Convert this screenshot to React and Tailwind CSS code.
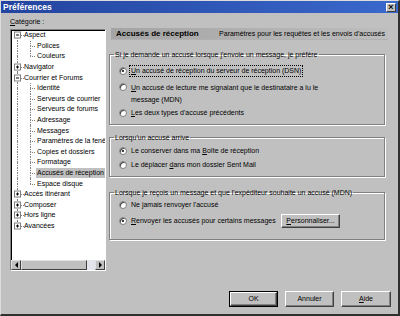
import React from 'react'

const tree = [
  { t: 'Aspect', lvl: 0, exp: '-' },
  { t: 'Polices', lvl: 1 },
  { t: 'Couleurs', lvl: 1, last: true },
  { t: 'Navigator', lvl: 0, exp: '+' },
  { t: 'Courrier et Forums', lvl: 0, exp: '-' },
  { t: 'Identité', lvl: 1 },
  { t: 'Serveurs de courrier', lvl: 1 },
  { t: 'Serveurs de forums', lvl: 1 },
  { t: 'Adressage', lvl: 1 },
  { t: 'Messages', lvl: 1 },
  { t: 'Paramètres de la fenêtre', lvl: 1 },
  { t: 'Copies et dossiers', lvl: 1 },
  { t: 'Formatage', lvl: 1 },
  { t: 'Accusés de réception', lvl: 1, sel: true },
  { t: 'Espace disque', lvl: 1, last: true },
  { t: 'Accès itinérant', lvl: 0, exp: '+' },
  { t: 'Composer', lvl: 0, exp: '+' },
  { t: 'Hors ligne', lvl: 0, exp: '+' },
  { t: 'Avancées', lvl: 0, exp: '+' },
]

function Expander({ sign }) {
  return (
    <span className="absolute left-[3px] top-1/2 flex h-[7px] w-[7px] -translate-y-1/2 items-center justify-center border border-[#808080] bg-white">
      <span className="absolute h-px w-[3px] bg-black" />
      {sign === '+' && <span className="absolute h-[3px] w-px bg-black" />}
    </span>
  )
}

function TreeRow({ item, first, lastRoot }) {
  return (
    <div className="flex h-[10.6px] items-center whitespace-nowrap">
      {/* root level lines */}
      <div className="relative h-full w-[13px] shrink-0">
        {!first && <span className="absolute left-[6px] top-0 h-1/2 border-l border-dotted border-[#808080]" />}
        {!lastRoot && <span className="absolute left-[6px] top-1/2 h-1/2 border-l border-dotted border-[#808080]" />}
        {item.lvl === 0 && (
          <>
            <span className="absolute left-[10px] top-1/2 w-[3px] border-t border-dotted border-[#808080]" />
            <Expander sign={item.exp} />
          </>
        )}
      </div>
      {item.lvl === 1 && (
        <div className="relative h-full w-[12px] shrink-0">
          <span className="absolute left-[6px] top-0 h-1/2 border-l border-dotted border-[#808080]" />
          {!item.last && <span className="absolute left-[6px] top-1/2 h-1/2 border-l border-dotted border-[#808080]" />}
          <span className="absolute left-[6px] top-1/2 w-[5px] border-t border-dotted border-[#808080]" />
        </div>
      )}
      <span className={`leading-[10px] ${item.lvl === 1 ? 'px-px' : ''} ${item.sel ? 'bg-[#c0c0c0]' : ''}`}>{item.t}</span>
    </div>
  )
}

function Radio({ on }) {
  return (
    <span className="flex h-[8px] w-[8px] shrink-0 items-center justify-center rounded-full border border-[#808080] bg-white shadow-[inset_1px_1px_0_#404040]">
      {on && <span className="h-[2px] w-[2px] rounded-full bg-black" />}
    </span>
  )
}

function Option({ on, focus, children, className = '' }) {
  return (
    <div className={`flex items-start ${className}`}>
      <span className="flex h-[12px] items-center">
        <Radio on={on} />
      </span>
      <span className={`ml-[2px] border px-px leading-[10px] ${focus ? 'border-dotted border-black' : 'border-transparent'}`}>
        {children}
      </span>
    </div>
  )
}

function Group({ label, className = '', children }) {
  return (
    <fieldset className={`w-[276px] border border-[#808080] px-[4px] shadow-[inset_1px_1px_0_#fff,1px_1px_0_#fff] ${className}`}>
      <legend className="px-px text-[7px] leading-[9px]">{label}</legend>
      <div className="pl-[5px]">{children}</div>
    </fieldset>
  )
}

function Button({ children, isDefault, className = '' }) {
  const face = (
    <span className="flex h-full w-full items-center justify-center border border-b-[#404040] border-l-white border-r-[#404040] border-t-white shadow-[inset_-1px_-1px_0_#808080]">
      {children}
    </span>
  )
  if (isDefault) {
    return <span className={`flex border border-black ${className}`}>{face}</span>
  }
  return <span className={`flex ${className}`}>{face}</span>
}

function ScrollBtn({ dir }) {
  return (
    <span className="flex h-full w-[10px] shrink-0 items-center justify-center border border-b-[#404040] border-l-[#e0e0e0] border-r-[#404040] border-t-[#e0e0e0] bg-[#c0c0c0]">
      {dir === 'left' ? (
        <span className="h-0 w-0 border-y-[3px] border-r-[3px] border-y-transparent border-r-black" />
      ) : (
        <span className="h-0 w-0 border-y-[3px] border-l-[3px] border-y-transparent border-l-black" />
      )}
    </span>
  )
}

export default function App() {
  return (
    <div className="flex h-[316px] w-[400px] flex-col overflow-hidden border-b-2 border-l border-r-2 border-t border-[#dcdcdc] border-b-[#303030] border-r-[#303030] bg-[#c0c0c0] font-['Liberation_Sans',Arial,sans-serif] text-[7px] text-black">
      {/* Title bar */}
      <div className="flex h-[12px] shrink-0 items-center justify-between bg-linear-to-r from-[#23449f] to-[#3a68cc] px-[2px]">
        <span className="text-[8.5px] font-bold leading-none text-white">Préférences</span>
        <span className="flex h-[9px] w-[10px] items-center justify-center border border-b-[#404040] border-l-white border-r-[#404040] border-t-white bg-[#c0c0c0] text-[9px] font-bold leading-none">
          ×
        </span>
      </div>

      <div className="flex flex-1">
        {/* Left: category tree */}
        <div className="ml-[9px] w-[96px] shrink-0">
          <div className="flex h-[16px] items-center leading-none">
            <span><u>C</u>atégorie :</span>
          </div>
          <div className="flex h-[242px] flex-col border border-b-white border-l-[#808080] border-r-white border-t-[#808080] bg-white shadow-[inset_1px_1px_0_#000]">
            <div className="flex-1 overflow-hidden">
              {tree.map((item, i) => (
                <TreeRow key={item.t} item={item} first={i === 0} lastRoot={i === tree.length - 1} />
              ))}
            </div>
            <div className="flex h-[10px] shrink-0">
              <ScrollBtn dir="left" />
              <span className="h-full w-[66px] border border-b-[#404040] border-l-[#e0e0e0] border-r-[#404040] border-t-[#e0e0e0] bg-[#c0c0c0]" />
              <span className="h-full flex-1 bg-[#e4e4ec]" />
              <ScrollBtn dir="right" />
            </div>
          </div>
        </div>

        {/* Right: panel */}
        <div className="ml-[3px] mt-[15px] w-[279px]">
          <div className="ml-[2px] flex h-[12px] items-center justify-between border-b border-[#b0b0b0] bg-linear-to-r from-[#a4a4a4] to-[#bdbdbd] pl-[5px] pr-[3px]">
            <span className="text-[8px] font-bold leading-none">Accusés de réception</span>
            <span className="leading-none">Paramètres pour les requêtes et les envois d'accusés</span>
          </div>

          <Group label="Si je demande un accusé lorsque j'envoie un message, je préfère" className="mt-[9.5px] pb-[5px]">
            <div className="pt-[6.5px]">
              <Option on focus className="h-[12px] items-center">
                <u>U</u>n accusé de réception du serveur de réception (DSN)
              </Option>
              <Option className="mt-[4px]">
                <span className="block leading-[12px]">
                  <u>U</u>n accusé de lecture me signalant que le destinataire a lu le
                  <br />
                  message (MDN)
                </span>
              </Option>
              <Option className="h-[12px] items-center">
                <u>L</u>es deux types d'accusé précédents
              </Option>
            </div>
          </Group>

          <Group label="Lorsqu'un accusé arrive" className="mt-[7.5px] pb-[5px]">
            <div className="pt-[3px]">
              <Option on className="h-[12px] items-center">
                Le conserver dans ma <u>B</u>oîte de réception
              </Option>
              <Option className="mt-[2.5px] h-[12px] items-center">
                Le déplacer <u>d</u>ans mon dossier Sent Mail
              </Option>
            </div>
          </Group>

          <Group label="Lorsque je reçois un message et que l'expéditeur souhaite un accusé (MDN)" className="mt-[10.5px] pb-[11px]">
            <div className="pt-[2.5px]">
              <Option className="h-[12px] items-center">Ne jamais renvoyer l'accusé</Option>
              <div className="mt-[3px] flex h-[14px] items-center">
                <Radio on />
                <span className="ml-[2px] w-[152px] border border-transparent px-px leading-[10px]">
                  <u>R</u>envoyer les accusés pour certains messages
                </span>
                <Button className="h-[14px] w-[59px]">
                  <u>P</u>ersonnaliser...
                </Button>
              </div>
            </div>
          </Group>
        </div>
      </div>

      {/* Footer buttons */}
      <div className="flex shrink-0 justify-end gap-[7px] pb-[7px] pr-[7px]">
        <Button isDefault className="h-[16px] w-[49px]">OK</Button>
        <Button className="h-[16px] w-[49px]">Annuler</Button>
        <Button className="h-[16px] w-[50px]">
          <u>A</u>ide
        </Button>
      </div>
    </div>
  )
}
